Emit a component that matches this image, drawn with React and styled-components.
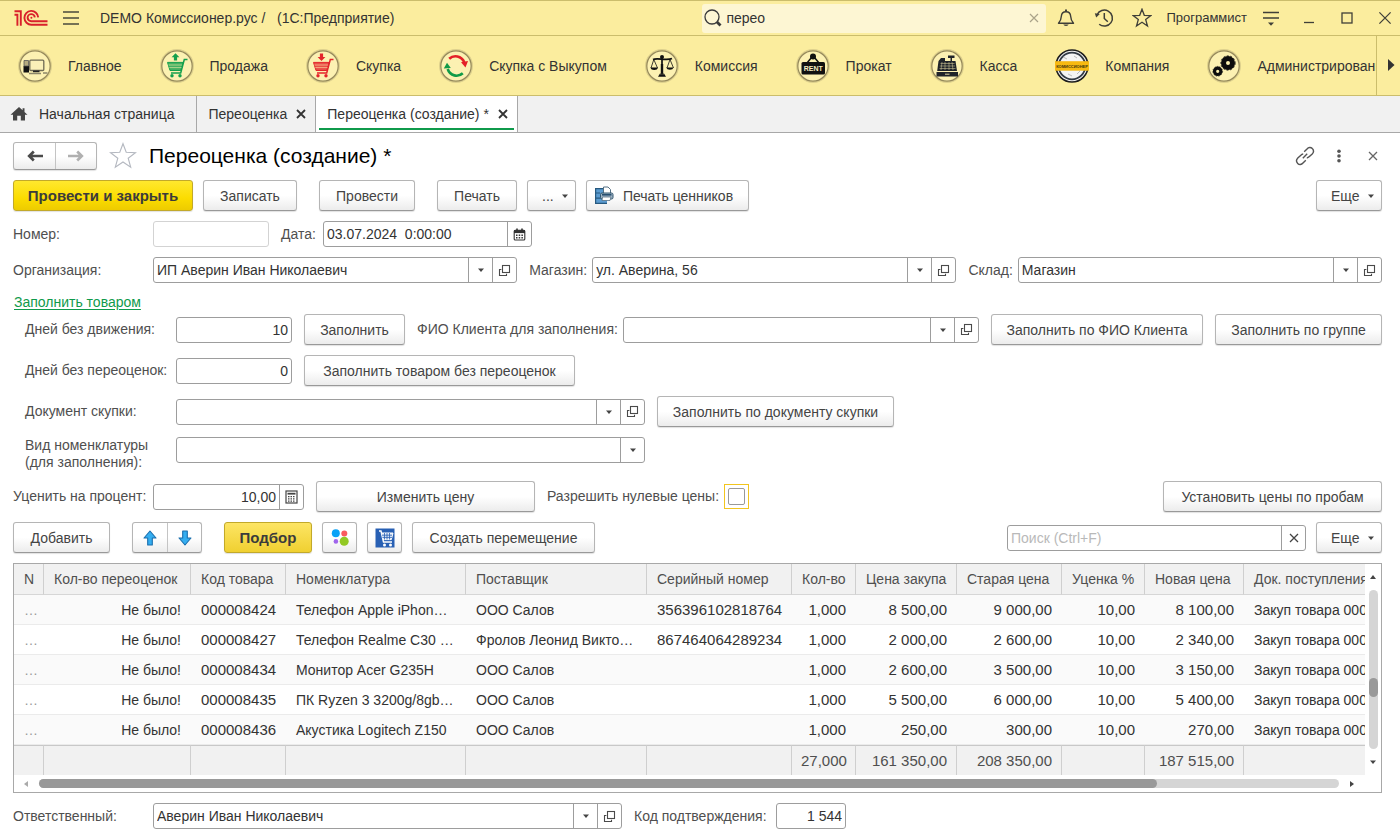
import styled, { createGlobalStyle, css } from "styled-components";
import { useState } from "react";

const GlobalStyle = createGlobalStyle`
  * {
    box-sizing: border-box;
  }
  body {
    margin: 0;
    background: #fff;
    color: #333;
    font-family: "Liberation Sans", Arial, sans-serif;
    font-size: 14px;
    line-height: 18px;
  }
  button, input, select {
    font: inherit;
    color: inherit;
    margin: 0;
  }
`;

const columns = [
  { title: "N", width: 30 },
  { title: "Кол-во переоценок", width: 147, right: true },
  { title: "Код товара", width: 95, digits: true },
  { title: "Номенклатура", width: 180 },
  { title: "Поставщик", width: 181 },
  { title: "Серийный номер", width: 145, digits: true },
  { title: "Кол-во", width: 64, right: true, digits: true },
  { title: "Цена закупа", width: 101, right: true, digits: true },
  { title: "Старая цена", width: 105, right: true, digits: true },
  { title: "Уценка %", width: 83, right: true, digits: true },
  { title: "Новая цена", width: 99, right: true, digits: true },
  { title: "Док. поступления" },
];

const rows = [
  ["…", "Не было!", "000008424", "Телефон Apple iPhon…", "ООО Салов", "356396102818764", "1,000", "8 500,00", "9 000,00", "10,00", "8 100,00", "Закуп товара 000"],
  ["…", "Не было!", "000008427", "Телефон Realme C30 …", "Фролов Леонид Викто…", "867464064289234", "1,000", "2 000,00", "2 600,00", "10,00", "2 340,00", "Закуп товара 000"],
  ["…", "Не было!", "000008434", "Монитор Acer G235H", "ООО Салов", "", "1,000", "2 600,00", "3 500,00", "10,00", "3 150,00", "Закуп товара 000"],
  ["…", "Не было!", "000008435", "ПК Ryzen 3 3200g/8gb…", "ООО Салов", "", "1,000", "5 500,00", "6 000,00", "10,00", "5 400,00", "Закуп товара 000"],
  ["…", "Не было!", "000008436", "Акустика Logitech Z150", "ООО Салов", "", "1,000", "250,00", "300,00", "10,00", "270,00", "Закуп товара 000"],
];

const totals = ["", "", "", "", "", "", "27,000", "161 350,00", "208 350,00", "", "187 515,00", ""];

const Logo = () => (
  <svg width="34" height="18" viewBox="0 0 34 18" fill="none" stroke="#d9202b" strokeWidth="1.9">
    <path d="M0.5 5.8 H3.4 V16.8 M0.5 2.2 H6.8 V16.8" />
    <path d="M24.2 8.4 A6.9 6.9 0 1 0 17.4 15.7 H33.5" />
    <path d="M20.8 8.4 A3.6 3.6 0 1 0 17.4 12.3 H33.5" />
    <circle cx="17.4" cy="8.7" r="1" fill="#d9202b" stroke="none" />
  </svg>
);

const MenuIcon = () => (
  <svg width="18" height="16" viewBox="0 0 18 16" stroke="#4a4a3c" strokeWidth="1.5">
    <path d="M1 2 H17 M1 8 H17 M1 14 H17" />
  </svg>
);

const SearchIcon = () => (
  <svg width="18" height="18" viewBox="0 0 18 18" fill="none" stroke="#3a3a3a">
    <circle cx="8" cy="8" r="7" strokeWidth="1.3" />
    <path d="M13 13 L16.5 16.5" strokeWidth="2.8" />
  </svg>
);

const BellIcon = () => (
  <svg width="18" height="20" viewBox="0 0 18 20" fill="none" stroke="#3f3f38" strokeWidth="1.4">
    <path d="M1.5 15.3 C4 12.5 4.2 11 4.3 8.5 C4.5 5.5 6.2 3.8 9 3.8 S13.5 5.5 13.7 8.5 C13.8 11 14 12.5 16.5 15.3 Z" strokeLinejoin="round" />
    <path d="M9 1.5 V4" strokeWidth="2" />
    <path d="M6.3 16.5 A2.8 2 0 0 0 11.7 16.5 Z" fill="#3f3f38" stroke="none" />
  </svg>
);

const HistoryIcon = () => (
  <svg width="20" height="20" viewBox="0 0 20 20" fill="none" stroke="#3f3f38" strokeWidth="1.5">
    <path d="M3 7 A8 8 0 1 1 5.2 16.2" />
    <path d="M0.8 5.2 L5.8 6 L2.2 9.4 Z" fill="#3f3f38" stroke="none" />
    <path d="M10.3 5 V10.5 L13.8 13.8" />
  </svg>
);

const StarIcon = ({ size, color, thin }) => (
  <svg width={size} height={size} viewBox="0 0 20 20" fill="none" stroke={color} strokeWidth={thin ? 0.8 : 1.3}>
    <path d="M10 1.2 L12.3 7.3 L18.9 7.6 L13.7 11.6 L15.5 18 L10 14.3 L4.5 18 L6.3 11.6 L1.1 7.6 L7.7 7.3 Z" />
  </svg>
);

const OptionsIcon = () => (
  <svg width="18" height="18" viewBox="0 0 18 18" stroke="#3f3f38" strokeWidth="1.5">
    <path d="M1 3.5 H17 M1 9 H17" />
    <path d="M6 13.5 H12 L9 16.8 Z" fill="#3f3f38" stroke="none" />
  </svg>
);

const CrossIcon = ({ size = 10, color = "#444", width = 1.3 }) => (
  <svg width={size} height={size} viewBox="0 0 10 10" stroke={color} strokeWidth={width}>
    <path d="M1 1 L9 9 M9 1 L1 9" />
  </svg>
);

const Triangle = ({ dir = "down", color = "#444" }) => {
  const shapes = {
    down: "M1 2.5 H7 L4 6 Z",
    up: "M1 6 H7 L4 2 Z",
    left: "M6 1 V7 L2 4 Z",
    right: "M2 1 V7 L6 4 Z",
  };
  return (
    <svg width="8" height="8" viewBox="0 0 8 8" fill={color}>
      <path d={shapes[dir]} />
    </svg>
  );
};

const OpenIcon = () => (
  <svg width="13" height="13" viewBox="0 0 13 13" fill="none" stroke="#4a4a4a" strokeWidth="1.1">
    <rect x="4.5" y="1.5" width="7" height="7" />
    <path d="M3.4 5.5 H1.5 V11.5 H8.5 V9.8" />
  </svg>
);

const CalendarIcon = () => (
  <svg width="13" height="13" viewBox="0 0 13 13" fill="none" stroke="#333">
    <rect x="1.2" y="2.2" width="10.6" height="9.8" rx="1" strokeWidth="1.1" />
    <path d="M1 3.6 H12" strokeWidth="3" />
    <path d="M4 0.5 V3 M9 0.5 V3" strokeWidth="1.6" />
    <path d="M3 7.3 H10.5 M3 9.8 H10.5" strokeWidth="1.5" strokeDasharray="1.5 1.2" />
  </svg>
);

const CalcIcon = () => (
  <svg width="13" height="14" viewBox="0 0 13 14" fill="none" stroke="#444">
    <rect x="1" y="1" width="11" height="12" strokeWidth="1.2" />
    <path d="M2.5 3.7 H10.5" strokeWidth="1.8" />
    <path d="M3 6.7 H10.5 M3 8.9 H10.5 M3 11.1 H10.5" strokeWidth="1.2" strokeDasharray="1.5 1" />
  </svg>
);

const HomeIcon = () => (
  <svg width="18" height="16" viewBox="0 0 18 16" fill="#444">
    <path d="M9 1 L0.5 8.8 H3 V14.6 H7.2 V9.8 H10.8 V14.6 H15 V8.8 H17.5 L14.5 6 V2.2 H12.6 V4.3 Z" />
  </svg>
);

const ArrowIcon = ({ color, back }) => (
  <svg width="18" height="14" viewBox="0 0 18 14" fill="none" stroke={color} strokeWidth="2.7">
    {back ? <path d="M17 7 H3.5 M7.8 2.5 L3.2 7 L7.8 11.5" /> : <path d="M1 7 H14.5 M10.2 2.5 L14.8 7 L10.2 11.5" />}
  </svg>
);

const LinkIcon = () => (
  <svg width="20" height="20" viewBox="0 0 20 20" fill="none" stroke="#555" strokeWidth="1.4">
    <path d="M9.2 5.8 L12 3 C13.5 1.2 15.8 1 17.3 2.6 C18.9 4.2 18.7 6.3 17.2 7.9 L14.4 10.6 C13.6 11.4 12.8 11.9 11.8 12" />
    <path d="M10.8 14.2 L8 17 C6.5 18.8 4.2 19 2.7 17.4 C1.1 15.8 1.3 13.7 2.8 12.1 L5.6 9.4 C6.4 8.6 7.2 8.1 8.2 8" />
    <path d="M7.8 12.2 L12.2 7.8" />
  </svg>
);

const DotsIcon = () => (
  <svg width="6" height="14" viewBox="0 0 6 14" fill="#555">
    <circle cx="3" cy="2.2" r="1.8" />
    <circle cx="3" cy="7" r="1.8" />
    <circle cx="3" cy="11.8" r="1.8" />
  </svg>
);

const PrinterIcon = () => (
  <svg width="20" height="19" viewBox="0 0 20 19">
    <path d="M1 2 H13 V18 H1 Z" fill="#5b9bd0" />
    <path d="M1 2.6 H9 M1 7 H6 M1 12.2 H13 M1 17.4 H13 M1.6 2 V18" stroke="#27597f" strokeWidth="1.2" />
    <path d="M9.5 1 H14 L16.5 3.5 V8 H9.5 Z" fill="#fff" stroke="#557084" />
    <rect x="6.5" y="7" width="12.5" height="6" rx="1.5" fill="#9fb4c5" stroke="#33566f" />
    <path d="M8.5 11 H17 L16 14.5 H8 Z" fill="#fff" stroke="#557084" strokeWidth="0.8" />
    <path d="M8 8.8 H17.5" stroke="#284f70" strokeWidth="1.6" />
  </svg>
);

const MoveIcon = ({ down }) => (
  <svg width="14" height="16" viewBox="0 0 14 16" fill="#35aef0" stroke="#1b6fae" strokeWidth="1.1" strokeLinejoin="round">
    {down ? (
      <path d="M4.7 1 H9.3 V8 H13 L7 15 L1 8 H4.7 Z" />
    ) : (
      <path d="M4.7 15 H9.3 V8 H13 L7 1 L1 8 H4.7 Z" />
    )}
  </svg>
);

const BubblesIcon = () => (
  <svg width="18" height="17" viewBox="0 0 18 17">
    <circle cx="4.8" cy="4.3" r="4" fill="#0aa2f7" />
    <circle cx="13.3" cy="4.5" r="3" fill="#fb5a5f" />
    <circle cx="4.9" cy="12.4" r="2.3" fill="#a065ec" />
    <circle cx="13.2" cy="12.2" r="4.5" fill="#93c924" />
  </svg>
);

const CartTileIcon = () => (
  <svg width="20" height="20" viewBox="0 0 20 20" fill="none">
    <rect x="0.5" y="0.5" width="19" height="19" fill="#2860b4" />
    <path d="M4 3 H6 L8.5 14 H17" stroke="#fff" strokeWidth="1.4" />
    <path d="M6.4 5 H18 L16.3 11.6 H8" fill="#dce8f8" stroke="#fff" />
    <path d="M7 7.2 H17 M7.4 9.4 H17 M9.5 5 V11.5 M12 5 V11.5 M14.5 5 V11.5" stroke="#2860b4" strokeWidth="0.8" />
    <circle cx="9.5" cy="17" r="1.5" fill="#fff" />
    <circle cx="15.5" cy="17" r="1.5" fill="#fff" />
  </svg>
);

const Cart = ({ color, up }) => (
  <g stroke={color} fill="none" strokeWidth="1.5">
    <path d="M27.5 10.5 H24.3 L20.7 24 H11" />
    <path d="M7.5 13.4 H23 L20.8 21.5 H10 Z" fill={color} fillOpacity="0.8" strokeWidth="1" />
    <path d="M8.5 16 H22 M9.3 18.6 H21.5" stroke="#fbeeaa" strokeWidth="0.6" />
    <circle cx="12" cy="26.8" r="1.7" fill={color} stroke="none" />
    <circle cx="20" cy="26.8" r="1.7" fill={color} stroke="none" />
    <path d={up ? "M15.5 4.2 L19.4 8.2 H17.1 V11.5 H13.9 V8.2 H11.6 Z" : "M15.5 12 L19.4 8 H17.1 V4.6 H13.9 V8 H11.6 Z"} fill={color} stroke="none" />
  </g>
);

const glyphs = {
  main: (
    <g>
      <rect x="5.5" y="17" width="5.5" height="6.5" fill="#111" />
      <path d="M6 11.5 H10.5 V17 H6 Z" fill="#b5ab80" stroke="#555" strokeWidth="0.8" />
      <rect x="11.8" y="11.2" width="14" height="10.3" rx="1" fill="#faf0b8" stroke="#6e6a54" strokeWidth="1.3" />
      <path d="M15 22.4 H21.5" stroke="#222" strokeWidth="1.7" />
      <path d="M11 24.5 H23 M25 24 H29.5" stroke="#8c866a" strokeWidth="1.5" />
    </g>
  ),
  sale: <Cart color="#14a04d" up />,
  buy: <Cart color="#e3252b" />,
  buyback: (
    <g fill="none" strokeWidth="2.6">
      <path d="M10.2 9.8 C14.8 5.4 22.5 6.8 25.3 13.2" stroke="#e42028" />
      <path d="M22 13.2 L29 12 L26.5 18.6 Z" fill="#e42028" stroke="none" />
      <path d="M23.8 24.2 C19 28.6 11 27 8.7 20" stroke="#119b48" />
      <path d="M4.8 19.5 L8 13.8 L11.8 19 Z" fill="#119b48" stroke="none" />
    </g>
  ),
  commission: (
    <g stroke="#111" fill="none">
      <path d="M8 10.5 C12 8.5 22 12 27 9.5 M17 7 V26" strokeWidth="1.7" />
      <circle cx="17" cy="8" r="2" fill="#111" stroke="none" />
      <path d="M8.8 10.5 L6 19 M8.8 10.5 L12.5 19 M25 10.5 L22 19 M25 10.5 L28.5 19" strokeWidth="0.8" />
      <path d="M5.5 18.5 H13 A3.8 3 0 0 1 5.5 18.5 Z M21.2 18.5 H28.6 A3.8 3 0 0 1 21.2 18.5 Z" fill="#111" stroke="none" />
      <path d="M13 27.8 H21 L19 24.5 H15 Z M15.8 15 H18.2 V26 H15.8 Z" fill="#111" stroke="none" />
    </g>
  ),
  rent: (
    <g>
      <path d="M11 14 L15.5 8.5 M23 14 L18.5 8.5" stroke="#111" strokeWidth="1.5" />
      <circle cx="17" cy="7.5" r="3" fill="#111" />
      <rect x="5.5" y="13" width="23.5" height="12.5" rx="1.5" fill="#111" />
      <text x="17.2" y="22" textAnchor="middle" fontSize="7" fontWeight="bold" fill="#f5ecc0">RENT</text>
    </g>
  ),
  cash: (
    <g fill="#20242a">
      <path d="M8.5 12 L11 9 H15 V12 L25.5 12 L27 22 H7.2 Z M18 6.5 H24.5 V9 H22 V12 H20.5 V9 H18 Z" />
      <path d="M6.5 23 H28 V27.5 H6.5 Z" />
      <path d="M10.5 14.5 H24.5 M9.8 17 H25 M9.5 19.5 H25.5 M12 13 L11 21 M15 13 V21 M19 13 V21 M22 13 L23 21" stroke="#ded4a2" strokeWidth="0.5" />
      <path d="M15 25.2 H19.5" stroke="#ded4a2" />
    </g>
  ),
  company: (
    <g>
      <circle cx="17" cy="17" r="16" fill="#f4f4f4" stroke="#1d1d1d" strokeWidth="1.6" />
      <circle cx="17" cy="17" r="13.3" fill="#f4f4f4" stroke="#333b45" strokeWidth="1.8" />
      <path d="M8 8 L12 10 M19 7 L22 9 M13 25 L17 27 M22 25 L25 22" stroke="#bbb" />
      <rect x="0" y="12.2" width="34" height="9.5" fill="#f7b911" />
      <text x="17" y="18.5" textAnchor="middle" fontSize="4" fontWeight="bold" fill="#3d3210">КОМИССИОНЕР</text>
    </g>
  ),
  admin: (
    <g fill="none" stroke="#0d0d0d">
      <circle cx="21" cy="14" r="4.5" strokeWidth="5" />
      <circle cx="21" cy="14" r="7.2" strokeWidth="0.8" strokeDasharray="2 1.6" />
      <circle cx="10.7" cy="22.3" r="3.2" strokeWidth="3.2" />
      <circle cx="10.7" cy="22.3" r="4.9" strokeWidth="0.6" strokeDasharray="1.5 1.2" />
    </g>
  ),
};

const SectionIcon = ({ name }) => (
  <svg width="34" height="34" viewBox="0 0 34 34">
    {name !== "company" && (
      <>
        <circle cx="17" cy="17" r="16.2" fill="none" stroke="#ddd08d" strokeWidth="1.6" />
        <circle cx="17" cy="17" r="15.2" fill="#fcf1b2" stroke="#94885a" strokeWidth="1.2" />
      </>
    )}
    {glyphs[name]}
  </svg>
);

const sections = [
  ["main", "Главное"],
  ["sale", "Продажа"],
  ["buy", "Скупка"],
  ["buyback", "Скупка с Выкупом"],
  ["commission", "Комиссия"],
  ["rent", "Прокат"],
  ["cash", "Касса"],
  ["company", "Компания"],
  ["admin", "Администрирование"],
];

const SelectField = ({ id, value, open }) => (
  <Field>
    <Combo>
      <Select id={id} defaultValue={value}>
        <option>{value}</option>
      </Select>
      <ComboArrow>
        <Triangle />
      </ComboArrow>
    </Combo>
    {open && (
      <FieldButton type="button" aria-label="Открыть">
        <OpenIcon />
      </FieldButton>
    )}
  </Field>
);

const App = () => {
  const [search, setSearch] = useState("перео");
  const [allowZero, setAllowZero] = useState(false);
  const [filter, setFilter] = useState("");

  return (
    <>
      <GlobalStyle />
      <TitleBar>
        <Logo />
        <IconButton aria-label="Меню">
          <MenuIcon />
        </IconButton>
        <AppName>DEMO Комиссионер.рус /&nbsp;&nbsp; (1С:Предприятие)</AppName>
        <GlobalSearch>
          <SearchIcon />
          <GlobalInput aria-label="Поиск" value={search} onChange={(e) => setSearch(e.target.value)} />
          <IconButton aria-label="Очистить" onClick={() => setSearch("")}>
            <CrossIcon color="#aaa38a" width={1.2} />
          </IconButton>
        </GlobalSearch>
        <Tools>
          <IconButton aria-label="Оповещения"><BellIcon /></IconButton>
          <IconButton aria-label="История"><HistoryIcon /></IconButton>
          <IconButton aria-label="Избранное"><StarIcon size={20} color="#3f3f38" /></IconButton>
          <UserName>Программист</UserName>
          <IconButton aria-label="Сервис"><OptionsIcon /></IconButton>
          <IconButton aria-label="Свернуть">
            <svg width="12" height="12" viewBox="0 0 12 12" stroke="#3f3f38" strokeWidth="1.3"><path d="M1 10.5 H11" /></svg>
          </IconButton>
          <IconButton aria-label="Развернуть">
            <svg width="12" height="12" viewBox="0 0 12 12" fill="none" stroke="#3f3f38" strokeWidth="1.3"><rect x="1" y="1" width="10" height="10" /></svg>
          </IconButton>
          <IconButton aria-label="Закрыть"><CrossIcon size={14} color="#3f3f38" width={0.9} /></IconButton>
        </Tools>
      </TitleBar>

      <Sections>
        <SectionList>
          {sections.map(([icon, title]) => (
            <SectionLink href="#" key={icon}>
              <SectionIcon name={icon} />
              {title}
            </SectionLink>
          ))}
        </SectionList>
        <SectionsNext aria-label="Далее">
          <svg width="8" height="12" viewBox="0 0 8 12" fill="#333"><path d="M1 0 V12 L7.5 6 Z" /></svg>
        </SectionsNext>
      </Sections>

      <Tabs>
        <Tab $home>
          <TabButton><HomeIcon />Начальная страница</TabButton>
        </Tab>
        <Tab>
          <TabButton>Переоценка</TabButton>
          <TabClose aria-label="Закрыть вкладку"><CrossIcon color="#333" width={1.8} /></TabClose>
        </Tab>
        <Tab $active>
          <TabButton>Переоценка (создание) *</TabButton>
          <TabClose aria-label="Закрыть вкладку"><CrossIcon color="#333" width={1.8} /></TabClose>
        </Tab>
      </Tabs>

      <Page onSubmit={(e) => e.preventDefault()}>
        <Heading>
          <ButtonPair>
            <PairButton type="button" $width={41} aria-label="Назад"><ArrowIcon back color="#4a4a4a" /></PairButton>
            <PairButton type="button" $width={41} aria-label="Вперед"><ArrowIcon color="#b0b0b0" /></PairButton>
          </ButtonPair>
          <StarIcon size={28} color="#b4b8c0" thin />
          <Title>Переоценка (создание) *</Title>
          <HeadingTools>
            <IconButton type="button" aria-label="Ссылка"><LinkIcon /></IconButton>
            <IconButton type="button" aria-label="Действия"><DotsIcon /></IconButton>
            <IconButton type="button" aria-label="Закрыть"><CrossIcon color="#666" /></IconButton>
          </HeadingTools>
        </Heading>

        <Row $gap={10}>
          <Button type="submit" $accent $width={180}>Провести и закрыть</Button>
          <Button type="button" $width={94}>Записать</Button>
          <Spacer />
          <Button type="button" $width={96}>Провести</Button>
          <Spacer />
          <Button type="button" $width={80}>Печать</Button>
          <Button type="button" $menu $width={49} aria-label="Печатные формы">...<Triangle /></Button>
          <Button type="button" $icon $width={163}><PrinterIcon />Печать ценников</Button>
          <PushRight>
            <Button type="button" $menu $width={66}>Еще<Triangle /></Button>
          </PushRight>
        </Row>

        <Row $gap={12}>
          <Pair>
            <Label htmlFor="number" $width={140}>Номер:</Label>
            <Field $width={116} $light><Input id="number" readOnly /></Field>
          </Pair>
          <Pair>
            <Label htmlFor="date" $width={42}>Дата:</Label>
            <Field $width={209}>
              <Input id="date" defaultValue="03.07.2024  0:00:00" />
              <FieldButton type="button" aria-label="Выбрать дату"><CalendarIcon /></FieldButton>
            </Field>
          </Pair>
        </Row>

        <Row $gap={12}>
          <Pair $grow>
            <Label htmlFor="org" $width={140}>Организация:</Label>
            <SelectField id="org" value="ИП Аверин Иван Николаевич" open />
          </Pair>
          <Pair $grow>
            <Label htmlFor="shop">Магазин:</Label>
            <SelectField id="shop" value="ул. Аверина, 56" open />
          </Pair>
          <Pair $grow>
            <Label htmlFor="store">Склад:</Label>
            <SelectField id="store" value="Магазин" open />
          </Pair>
        </Row>

        <FillGroup>
          <legend>
            <FillLink href="#">Заполнить товаром</FillLink>
          </legend>
          <FillRows>
            <Row $gap={12}>
              <Pair>
                <Label htmlFor="idle" $width={151}>Дней без движения:</Label>
                <Field $width={116}><Input id="idle" $right defaultValue="10" /></Field>
              </Pair>
              <Button type="button" $width={101}>Заполнить</Button>
              <Pair $grow>
                <Label htmlFor="client">ФИО Клиента для заполнения:</Label>
                <SelectField id="client" value="" open />
              </Pair>
              <Button type="button" $width={212}>Заполнить по ФИО Клиента</Button>
              <Button type="button" $width={167}>Заполнить по группе</Button>
            </Row>
            <Row $gap={12}>
              <Pair>
                <Label htmlFor="norevalue" $width={151}>Дней без переоценок:</Label>
                <Field $width={116}><Input id="norevalue" $right defaultValue="0" /></Field>
              </Pair>
              <Button type="button" $width={271}>Заполнить товаром без переоценок</Button>
            </Row>
            <Row $gap={12}>
              <Pair $width={620}>
                <Label htmlFor="doc" $width={151}>Документ скупки:</Label>
                <SelectField id="doc" value="" open />
              </Pair>
              <Button type="button" $width={237}>Заполнить по документу скупки</Button>
            </Row>
            <Row $top>
              <Pair $width={620} $top>
                <Label htmlFor="kind" $width={151}>Вид номенклатуры<br />(для заполнения):</Label>
                <SelectField id="kind" value="" />
              </Pair>
            </Row>
          </FillRows>
        </FillGroup>

        <Row $gap={12}>
          <Pair>
            <Label htmlFor="percent" $width={140}>Уценить на процент:</Label>
            <Field $width={151}>
              <Input id="percent" $right defaultValue="10,00" />
              <FieldButton type="button" aria-label="Калькулятор"><CalcIcon /></FieldButton>
            </Field>
          </Pair>
          <Button type="button" $width={219}>Изменить цену</Button>
          <Pair>
            <Label htmlFor="zero">Разрешить нулевые цены:</Label>
            <CheckFrame>
              <Checkbox id="zero" type="checkbox" checked={allowZero} onChange={() => setAllowZero(!allowZero)} />
            </CheckFrame>
          </Pair>
          <PushRight>
            <Button type="button" $width={219}>Установить цены по пробам</Button>
          </PushRight>
        </Row>

        <Row $gap={10}>
          <Button type="button" $width={97}>Добавить</Button>
          <Spacer />
          <ButtonPair $tall>
            <PairButton type="button" $width={34} aria-label="Вверх"><MoveIcon /></PairButton>
            <PairButton type="button" $width={34} aria-label="Вниз"><MoveIcon down /></PairButton>
          </ButtonPair>
          <Spacer />
          <Button type="button" $accent $soft $width={88}>Подбор</Button>
          <Button type="button" $width={35} aria-label="Витрина"><BubblesIcon /></Button>
          <Button type="button" $width={35} aria-label="Корзина"><CartTileIcon /></Button>
          <Button type="button" $width={183}>Создать перемещение</Button>
          <PushRight>
            <Field $width={299}>
              <Input
                aria-label="Поиск в таблице"
                placeholder="Поиск (Ctrl+F)"
                value={filter}
                onChange={(e) => setFilter(e.target.value)}
              />
              <FieldButton type="button" aria-label="Очистить поиск" onClick={() => setFilter("")}>
                <CrossIcon />
              </FieldButton>
            </Field>
            <Button type="button" $menu $width={66}>Еще<Triangle /></Button>
          </PushRight>
        </Row>

        <Grid>
          <GridMain>
            <TableClip>
              <Table>
                <colgroup>
                  {columns.map((col) => (
                    <col key={col.title} style={{ width: col.width }} />
                  ))}
                </colgroup>
                <thead>
                  <tr>
                    {columns.map((col) => (
                      <HeadCell key={col.title}>{col.title}</HeadCell>
                    ))}
                  </tr>
                </thead>
                <tbody>
                  {rows.map((row) => (
                    <BodyRow key={row[2]}>
                      {row.map((cell, i) => (
                        <Cell
                          key={columns[i].title}
                          $right={columns[i].right}
                          $digits={columns[i].digits}
                          $faint={i === 0}
                        >
                          {cell}
                        </Cell>
                      ))}
                    </BodyRow>
                  ))}
                </tbody>
                <tfoot>
                  <tr>
                    {totals.map((total, i) => (
                      <FootCell key={columns[i].title}>{total}</FootCell>
                    ))}
                  </tr>
                </tfoot>
              </Table>
            </TableClip>
            <VerticalScroll>
              <Triangle dir="up" />
              <VerticalTrack>
                <VerticalThumb />
              </VerticalTrack>
              <Triangle />
            </VerticalScroll>
          </GridMain>
          <HorizontalScroll>
            <Triangle dir="left" color="#aaa" />
            <HorizontalTrack>
              <HorizontalThumb />
            </HorizontalTrack>
            <Triangle dir="right" />
          </HorizontalScroll>
        </Grid>

        <Row $gap={12}>
          <Pair $width={609}>
            <Label htmlFor="owner" $width={140}>Ответственный:</Label>
            <SelectField id="owner" value="Аверин Иван Николаевич" open />
          </Pair>
          <Pair>
            <Label htmlFor="code" $width={142}>Код подтверждения:</Label>
            <Field $width={70}><Input id="code" $right defaultValue="1 544" /></Field>
          </Pair>
        </Row>
      </Page>
    </>
  );
};

const TitleBar = styled.header`
  display: flex;
  align-items: center;
  height: 36px;
  padding: 0 3px 0 14px;
  background: #fbed9e;
  border-top: 1px solid #cbbd6c;
  border-bottom: 1px solid #cbbd6c;
`;

const IconButton = styled.button`
  display: flex;
  align-items: center;
  justify-content: center;
  flex: none;
  width: 24px;
  height: 24px;
  padding: 0;
  border: none;
  background: none;
  cursor: pointer;

  ${TitleBar} > & {
    margin: 0 17px 0 11px;
  }
`;

const AppName = styled.div`
  flex: 1;
  white-space: nowrap;
`;

const GlobalSearch = styled.div`
  display: flex;
  align-items: center;
  flex: 0 1 344px;
  height: 29px;
  padding: 0 0 0 2px;
  background: #fdf6d3;
  border-radius: 3px;
`;

const GlobalInput = styled.input`
  flex: 1;
  min-width: 0;
  padding: 0 4px;
  border: none;
  outline: none;
  background: none;
`;

const Tools = styled.div`
  display: flex;
  align-items: center;
  gap: 14px;
  margin-left: 8px;
`;

const UserName = styled.span`
  margin: 0 -2px;
  font-size: 13px;
`;

const Sections = styled.nav`
  display: flex;
  height: 60px;
  background: #fbed9e;
  border-bottom: 1px solid #cbbd6c;
`;

const SectionList = styled.div`
  display: flex;
  align-items: center;
  flex: 1;
  gap: 38px;
  min-width: 0;
  padding-left: 18px;
  overflow: hidden;
`;

const SectionLink = styled.a`
  display: flex;
  align-items: center;
  flex: none;
  gap: 16px;
  color: #333;
  text-decoration: none;
`;

const SectionsNext = styled.button`
  width: 24px;
  padding: 0 0 0 4px;
  border: none;
  border-left: 1px solid #cbbd6c;
  background: none;
`;

const Tabs = styled.div`
  display: flex;
  height: 37px;
  background: #f1f1f1;
  border-bottom: 1px solid #a8a8a8;
`;

const Tab = styled.div`
  display: flex;
  align-items: center;
  gap: 9px;
  padding: ${(props) => (props.$home ? "0 22px 0 10px" : "0 9px 0 11px")};
  border-right: 1px solid #a8a8a8;
  ${(props) =>
    props.$active &&
    css`
      background: linear-gradient(#0f9a4b, #0f9a4b) center bottom 2px / calc(100% - 6px) 2px no-repeat #fff;
    `}
`;

const TabButton = styled.button`
  display: flex;
  align-items: center;
  gap: 11px;
  padding: 0;
  border: none;
  background: none;
  white-space: nowrap;
`;

const TabClose = styled.button`
  display: flex;
  padding: 0;
  border: none;
  background: none;
`;

const Page = styled.form`
  display: flex;
  flex-direction: column;
  gap: 10px;
  padding: 9px 18px 0 13px;
`;

const Heading = styled.div`
  display: flex;
  align-items: center;
  height: 28px;
  margin-right: -3px;
  gap: 12px;
`;

const Title = styled.h1`
  margin: 0;
  color: #000;
  font-size: 21px;
  font-weight: normal;
  line-height: 28px;
`;

const HeadingTools = styled.div`
  display: flex;
  gap: 10px;
  margin-left: auto;
`;

const Row = styled.div`
  display: flex;
  align-items: ${(props) => (props.$top ? "flex-start" : "center")};
  gap: ${(props) => props.$gap || 0}px;
`;

const Spacer = styled.span`
  width: 2px;
`;

const PushRight = styled.div`
  display: flex;
  align-items: center;
  gap: 10px;
  margin-left: auto;
`;

const raised = css`
  background: linear-gradient(#fff 50%, #ececec);
  border: 1px solid #b5b5b5;
  border-bottom-color: #999;
  border-radius: 3px;
  box-shadow: 0 1px 1px rgba(0, 0, 0, 0.12);
`;

const Button = styled.button`
  ${raised}
  display: flex;
  align-items: center;
  justify-content: ${(props) => (props.$menu ? "space-between" : "center")};
  flex: none;
  gap: ${(props) => (props.$icon ? 9 : 0)}px;
  width: ${(props) => props.$width}px;
  height: 31px;
  padding: ${(props) => (props.$menu ? "0 6px 0 14px" : props.$icon ? "0 8px 0 0" : "0")};
  white-space: nowrap;
  color: #444;
  ${(props) =>
    props.$accent &&
    css`
      font-size: 15px;
      font-weight: bold;
      color: #3b3b3b;
      background: ${props.$soft ? "linear-gradient(#fde564, #f0d031)" : "linear-gradient(#ffe82e, #fbdc00 60%, #edcb00)"};
      border-color: #c2a92a;
    `}
`;

const ButtonPair = styled.div`
  ${raised}
  display: flex;
  height: ${(props) => (props.$tall ? 31 : 28)}px;
`;

const PairButton = styled.button`
  display: flex;
  align-items: center;
  justify-content: center;
  width: ${(props) => props.$width}px;
  padding: 0;
  border: none;
  background: none;

  & + & {
    border-left: 1px solid #c4c4c4;
  }
`;

const Pair = styled.div`
  display: flex;
  align-items: ${(props) => (props.$top ? "flex-start" : "center")};
  flex: ${(props) => (props.$grow ? "1 1 auto" : props.$width ? `0 1 ${props.$width}px` : "none")};
`;

const Label = styled.label`
  flex: none;
  width: ${(props) => (props.$width ? `${props.$width}px` : "auto")};
  padding-right: ${(props) => (props.$width ? 0 : 5)}px;
  color: #4f4f4f;
  line-height: 17px;
  white-space: nowrap;
`;

const Field = styled.div`
  display: flex;
  flex: ${(props) => (props.$width ? "none" : "1 1 auto")};
  width: ${(props) => props.$width || 0}px;
  min-width: 0;
  height: 26px;
  background: #fff;
  border: 1px solid ${(props) => (props.$light ? "#d3d3d3" : "#9d9d9d")};
  border-radius: 3px;
`;

const Input = styled.input`
  flex: 1;
  min-width: 0;
  padding: 0 3px;
  border: none;
  outline: none;
  background: none;
  white-space: pre;
  text-align: ${(props) => (props.$right ? "right" : "left")};

  &::placeholder {
    color: #b9b9b9;
  }
`;

const FieldButton = styled.button`
  display: flex;
  align-items: center;
  justify-content: center;
  flex: 0 0 24px;
  padding: 0;
  border: none;
  border-left: 1px solid #9d9d9d;
  background: none;
`;

const Combo = styled.div`
  display: grid;
  grid-template-columns: 1fr 24px;
  flex: 1;
  min-width: 0;
`;

const Select = styled.select`
  grid-area: 1 / 1 / 2 / 3;
  appearance: none;
  min-width: 0;
  padding: 0 27px 0 3px;
  border: none;
  outline: none;
  background: none;
`;

const ComboArrow = styled.span`
  display: flex;
  grid-area: 1 / 2;
  align-items: center;
  justify-content: center;
  border-left: 1px solid #9d9d9d;
  pointer-events: none;
`;

const FillGroup = styled.fieldset`
  min-width: 0;
  margin: 0;
  padding: 0;
  border: none;

  legend {
    padding: 0 0 3px 1px;
  }
`;

const FillLink = styled.a`
  color: #0f9a4b;
  text-underline-offset: 2px;
`;

const FillRows = styled.div`
  display: flex;
  flex-direction: column;
  gap: 10px;
  padding-left: 12px;
`;

const CheckFrame = styled.span`
  display: flex;
  padding: 3px;
  border: 1px solid #f2c51e;
`;

const Checkbox = styled.input`
  appearance: none;
  width: 17px;
  height: 17px;
  border: 1px solid #999;
  border-radius: 2px;
  background: #fff;

  &:checked {
    background: #4a4a4a;
  }
`;

const Grid = styled.div`
  border: 1px solid #a8a8a8;
`;

const GridMain = styled.div`
  display: flex;
`;

const TableClip = styled.div`
  flex: 1;
  min-width: 0;
  overflow: hidden;
`;

const Table = styled.table`
  width: 100%;
  table-layout: fixed;
  border-collapse: separate;
  border-spacing: 0;
`;

const HeadCell = styled.th`
  height: 31px;
  padding: 0 0 0 10px;
  overflow: hidden;
  background: #f1f1f1;
  border-right: 1px solid #cfcfcf;
  border-bottom: 1px solid #d6d6d6;
  color: #4f4f4f;
  font-weight: normal;
  text-align: left;
  white-space: nowrap;

  &:last-child {
    border-right: none;
  }
`;

const BodyRow = styled.tr`
  &:nth-child(odd) {
    background: #fafafa;
  }
`;

const Cell = styled.td`
  height: 30px;
  padding: 0 10px;
  overflow: hidden;
  border-bottom: 1px solid #ebebeb;
  color: ${(props) => (props.$faint ? "#999" : "#333")};
  font-size: ${(props) => (props.$digits ? 15 : 14)}px;
  text-align: ${(props) => (props.$right ? "right" : "left")};
  white-space: nowrap;

  &:last-child {
    padding-right: 0;
  }
`;

const FootCell = styled.td`
  height: 30px;
  padding: 0 9px;
  background: #f1f1f1;
  border-top: 1px solid #c8c8c8;
  border-right: 1px solid #cfcfcf;
  color: #4f4f4f;
  font-size: 15px;
  text-align: right;
  white-space: nowrap;

  &:last-child {
    border-right: none;
  }
`;

const VerticalScroll = styled.div`
  display: flex;
  flex-direction: column;
  align-items: center;
  gap: 9px;
  width: 16px;
  padding: 9px 0;
`;

const VerticalTrack = styled.div`
  display: flex;
  flex: 1;
  flex-direction: column;
  justify-content: flex-end;
  width: 9px;
  padding-bottom: 52px;
  border-radius: 5px;
  background: #d5d5d5;
`;

const VerticalThumb = styled.div`
  height: 19px;
  border-radius: 5px;
  background: #999;
`;

const HorizontalScroll = styled.div`
  display: flex;
  align-items: center;
  gap: 9px;
  height: 17px;
  padding: 0 25px 0 8px;
`;

const HorizontalTrack = styled.div`
  flex: 1;
  height: 9px;
  border-radius: 5px;
  background: #d5d5d5;
`;

const HorizontalThumb = styled.div`
  width: 86%;
  height: 9px;
  border-radius: 5px;
  background: #999;
`;

export default App;
